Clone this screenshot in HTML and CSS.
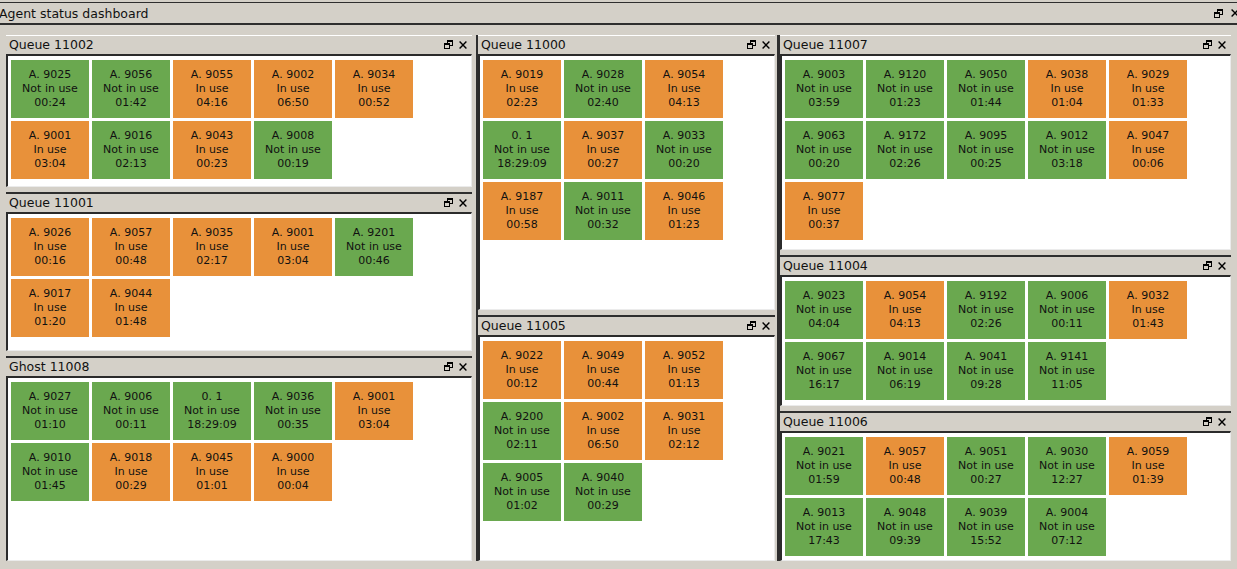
FILE: index.html
```html
<!DOCTYPE html>
<html>
<head>
<meta charset="utf-8">
<title>Agent status dashboard</title>
<link rel="stylesheet" href="styles.css">
</head>
<body>
<div class="titlebar">
  <span class="title">Agent status dashboard</span>
  <span class="ctrls top-ctrls">
    <svg class="ico-restore" width="9" height="9" viewBox="0 0 9 9" shape-rendering="crispEdges"><rect x="3" y="0" width="6" height="2"/><rect x="8" y="2" width="1" height="4"/><rect x="6" y="5" width="3" height="1"/><rect x="3" y="2" width="1" height="1"/><rect x="0" y="3" width="6" height="2"/><rect x="0" y="5" width="1" height="4"/><rect x="5" y="5" width="1" height="4"/><rect x="0" y="8" width="6" height="1"/></svg>
    <svg class="ico-close" width="8" height="8" viewBox="0 0 8 8"><path d="M0.6 0.6L7.4 7.4M7.4 0.6L0.6 7.4"/></svg>
  </span>
</div>
<div class="main">
  <div class="col col1">
    <section class="panel q11002">
      <header class="phead"><span>Queue 11002</span><span class="ctrls"><svg class="ico-restore" width="9" height="9" viewBox="0 0 9 9" shape-rendering="crispEdges"><rect x="3" y="0" width="6" height="2"/><rect x="8" y="2" width="1" height="4"/><rect x="6" y="5" width="3" height="1"/><rect x="3" y="2" width="1" height="1"/><rect x="0" y="3" width="6" height="2"/><rect x="0" y="5" width="1" height="4"/><rect x="5" y="5" width="1" height="4"/><rect x="0" y="8" width="6" height="1"/></svg><svg class="ico-close" width="8" height="8" viewBox="0 0 8 8"><path d="M0.6 0.6L7.4 7.4M7.4 0.6L0.6 7.4"/></svg></span></header>
      <div class="pbody">
        <div class="tile g"><span>A. 9025</span><span>Not in use</span><span>00:24</span></div>
        <div class="tile g"><span>A. 9056</span><span>Not in use</span><span>01:42</span></div>
        <div class="tile o"><span>A. 9055</span><span>In use</span><span>04:16</span></div>
        <div class="tile o"><span>A. 9002</span><span>In use</span><span>06:50</span></div>
        <div class="tile o"><span>A. 9034</span><span>In use</span><span>00:52</span></div>
        <div class="tile o"><span>A. 9001</span><span>In use</span><span>03:04</span></div>
        <div class="tile g"><span>A. 9016</span><span>Not in use</span><span>02:13</span></div>
        <div class="tile o"><span>A. 9043</span><span>In use</span><span>00:23</span></div>
        <div class="tile g"><span>A. 9008</span><span>Not in use</span><span>00:19</span></div>
      </div>
    </section>
    <section class="panel q11001">
      <header class="phead"><span>Queue 11001</span><span class="ctrls"><svg class="ico-restore" width="9" height="9" viewBox="0 0 9 9" shape-rendering="crispEdges"><rect x="3" y="0" width="6" height="2"/><rect x="8" y="2" width="1" height="4"/><rect x="6" y="5" width="3" height="1"/><rect x="3" y="2" width="1" height="1"/><rect x="0" y="3" width="6" height="2"/><rect x="0" y="5" width="1" height="4"/><rect x="5" y="5" width="1" height="4"/><rect x="0" y="8" width="6" height="1"/></svg><svg class="ico-close" width="8" height="8" viewBox="0 0 8 8"><path d="M0.6 0.6L7.4 7.4M7.4 0.6L0.6 7.4"/></svg></span></header>
      <div class="pbody">
        <div class="tile o"><span>A. 9026</span><span>In use</span><span>00:16</span></div>
        <div class="tile o"><span>A. 9057</span><span>In use</span><span>00:48</span></div>
        <div class="tile o"><span>A. 9035</span><span>In use</span><span>02:17</span></div>
        <div class="tile o"><span>A. 9001</span><span>In use</span><span>03:04</span></div>
        <div class="tile g"><span>A. 9201</span><span>Not in use</span><span>00:46</span></div>
        <div class="tile o"><span>A. 9017</span><span>In use</span><span>01:20</span></div>
        <div class="tile o"><span>A. 9044</span><span>In use</span><span>01:48</span></div>
      </div>
    </section>
    <section class="panel g11008">
      <header class="phead"><span>Ghost 11008</span><span class="ctrls"><svg class="ico-restore" width="9" height="9" viewBox="0 0 9 9" shape-rendering="crispEdges"><rect x="3" y="0" width="6" height="2"/><rect x="8" y="2" width="1" height="4"/><rect x="6" y="5" width="3" height="1"/><rect x="3" y="2" width="1" height="1"/><rect x="0" y="3" width="6" height="2"/><rect x="0" y="5" width="1" height="4"/><rect x="5" y="5" width="1" height="4"/><rect x="0" y="8" width="6" height="1"/></svg><svg class="ico-close" width="8" height="8" viewBox="0 0 8 8"><path d="M0.6 0.6L7.4 7.4M7.4 0.6L0.6 7.4"/></svg></span></header>
      <div class="pbody">
        <div class="tile g"><span>A. 9027</span><span>Not in use</span><span>01:10</span></div>
        <div class="tile g"><span>A. 9006</span><span>Not in use</span><span>00:11</span></div>
        <div class="tile g"><span>0. 1</span><span>Not in use</span><span>18:29:09</span></div>
        <div class="tile g"><span>A. 9036</span><span>Not in use</span><span>00:35</span></div>
        <div class="tile o"><span>A. 9001</span><span>In use</span><span>03:04</span></div>
        <div class="tile g"><span>A. 9010</span><span>Not in use</span><span>01:45</span></div>
        <div class="tile o"><span>A. 9018</span><span>In use</span><span>00:29</span></div>
        <div class="tile o"><span>A. 9045</span><span>In use</span><span>01:01</span></div>
        <div class="tile o"><span>A. 9000</span><span>In use</span><span>00:04</span></div>
      </div>
    </section>
  </div>
  <div class="col col2">
    <section class="panel q11000">
      <header class="phead"><span>Queue 11000</span><span class="ctrls"><svg class="ico-restore" width="9" height="9" viewBox="0 0 9 9" shape-rendering="crispEdges"><rect x="3" y="0" width="6" height="2"/><rect x="8" y="2" width="1" height="4"/><rect x="6" y="5" width="3" height="1"/><rect x="3" y="2" width="1" height="1"/><rect x="0" y="3" width="6" height="2"/><rect x="0" y="5" width="1" height="4"/><rect x="5" y="5" width="1" height="4"/><rect x="0" y="8" width="6" height="1"/></svg><svg class="ico-close" width="8" height="8" viewBox="0 0 8 8"><path d="M0.6 0.6L7.4 7.4M7.4 0.6L0.6 7.4"/></svg></span></header>
      <div class="pbody">
        <div class="tile o"><span>A. 9019</span><span>In use</span><span>02:23</span></div>
        <div class="tile g"><span>A. 9028</span><span>Not in use</span><span>02:40</span></div>
        <div class="tile o"><span>A. 9054</span><span>In use</span><span>04:13</span></div>
        <div class="tile g"><span>0. 1</span><span>Not in use</span><span>18:29:09</span></div>
        <div class="tile o"><span>A. 9037</span><span>In use</span><span>00:27</span></div>
        <div class="tile g"><span>A. 9033</span><span>Not in use</span><span>00:20</span></div>
        <div class="tile o"><span>A. 9187</span><span>In use</span><span>00:58</span></div>
        <div class="tile g"><span>A. 9011</span><span>Not in use</span><span>00:32</span></div>
        <div class="tile o"><span>A. 9046</span><span>In use</span><span>01:23</span></div>
      </div>
    </section>
    <section class="panel q11005">
      <header class="phead"><span>Queue 11005</span><span class="ctrls"><svg class="ico-restore" width="9" height="9" viewBox="0 0 9 9" shape-rendering="crispEdges"><rect x="3" y="0" width="6" height="2"/><rect x="8" y="2" width="1" height="4"/><rect x="6" y="5" width="3" height="1"/><rect x="3" y="2" width="1" height="1"/><rect x="0" y="3" width="6" height="2"/><rect x="0" y="5" width="1" height="4"/><rect x="5" y="5" width="1" height="4"/><rect x="0" y="8" width="6" height="1"/></svg><svg class="ico-close" width="8" height="8" viewBox="0 0 8 8"><path d="M0.6 0.6L7.4 7.4M7.4 0.6L0.6 7.4"/></svg></span></header>
      <div class="pbody">
        <div class="tile o"><span>A. 9022</span><span>In use</span><span>00:12</span></div>
        <div class="tile o"><span>A. 9049</span><span>In use</span><span>00:44</span></div>
        <div class="tile o"><span>A. 9052</span><span>In use</span><span>01:13</span></div>
        <div class="tile g"><span>A. 9200</span><span>Not in use</span><span>02:11</span></div>
        <div class="tile o"><span>A. 9002</span><span>In use</span><span>06:50</span></div>
        <div class="tile o"><span>A. 9031</span><span>In use</span><span>02:12</span></div>
        <div class="tile g"><span>A. 9005</span><span>Not in use</span><span>01:02</span></div>
        <div class="tile g"><span>A. 9040</span><span>Not in use</span><span>00:29</span></div>
      </div>
    </section>
  </div>
  <div class="col col3">
    <section class="panel q11007">
      <header class="phead"><span>Queue 11007</span><span class="ctrls"><svg class="ico-restore" width="9" height="9" viewBox="0 0 9 9" shape-rendering="crispEdges"><rect x="3" y="0" width="6" height="2"/><rect x="8" y="2" width="1" height="4"/><rect x="6" y="5" width="3" height="1"/><rect x="3" y="2" width="1" height="1"/><rect x="0" y="3" width="6" height="2"/><rect x="0" y="5" width="1" height="4"/><rect x="5" y="5" width="1" height="4"/><rect x="0" y="8" width="6" height="1"/></svg><svg class="ico-close" width="8" height="8" viewBox="0 0 8 8"><path d="M0.6 0.6L7.4 7.4M7.4 0.6L0.6 7.4"/></svg></span></header>
      <div class="pbody">
        <div class="tile g"><span>A. 9003</span><span>Not in use</span><span>03:59</span></div>
        <div class="tile g"><span>A. 9120</span><span>Not in use</span><span>01:23</span></div>
        <div class="tile g"><span>A. 9050</span><span>Not in use</span><span>01:44</span></div>
        <div class="tile o"><span>A. 9038</span><span>In use</span><span>01:04</span></div>
        <div class="tile o"><span>A. 9029</span><span>In use</span><span>01:33</span></div>
        <div class="tile g"><span>A. 9063</span><span>Not in use</span><span>00:20</span></div>
        <div class="tile g"><span>A. 9172</span><span>Not in use</span><span>02:26</span></div>
        <div class="tile g"><span>A. 9095</span><span>Not in use</span><span>00:25</span></div>
        <div class="tile g"><span>A. 9012</span><span>Not in use</span><span>03:18</span></div>
        <div class="tile o"><span>A. 9047</span><span>In use</span><span>00:06</span></div>
        <div class="tile o"><span>A. 9077</span><span>In use</span><span>00:37</span></div>
      </div>
    </section>
    <section class="panel q11004">
      <header class="phead"><span>Queue 11004</span><span class="ctrls"><svg class="ico-restore" width="9" height="9" viewBox="0 0 9 9" shape-rendering="crispEdges"><rect x="3" y="0" width="6" height="2"/><rect x="8" y="2" width="1" height="4"/><rect x="6" y="5" width="3" height="1"/><rect x="3" y="2" width="1" height="1"/><rect x="0" y="3" width="6" height="2"/><rect x="0" y="5" width="1" height="4"/><rect x="5" y="5" width="1" height="4"/><rect x="0" y="8" width="6" height="1"/></svg><svg class="ico-close" width="8" height="8" viewBox="0 0 8 8"><path d="M0.6 0.6L7.4 7.4M7.4 0.6L0.6 7.4"/></svg></span></header>
      <div class="pbody">
        <div class="tile g"><span>A. 9023</span><span>Not in use</span><span>04:04</span></div>
        <div class="tile o"><span>A. 9054</span><span>In use</span><span>04:13</span></div>
        <div class="tile g"><span>A. 9192</span><span>Not in use</span><span>02:26</span></div>
        <div class="tile g"><span>A. 9006</span><span>Not in use</span><span>00:11</span></div>
        <div class="tile o"><span>A. 9032</span><span>In use</span><span>01:43</span></div>
        <div class="tile g"><span>A. 9067</span><span>Not in use</span><span>16:17</span></div>
        <div class="tile g"><span>A. 9014</span><span>Not in use</span><span>06:19</span></div>
        <div class="tile g"><span>A. 9041</span><span>Not in use</span><span>09:28</span></div>
        <div class="tile g"><span>A. 9141</span><span>Not in use</span><span>11:05</span></div>
      </div>
    </section>
    <section class="panel q11006">
      <header class="phead"><span>Queue 11006</span><span class="ctrls"><svg class="ico-restore" width="9" height="9" viewBox="0 0 9 9" shape-rendering="crispEdges"><rect x="3" y="0" width="6" height="2"/><rect x="8" y="2" width="1" height="4"/><rect x="6" y="5" width="3" height="1"/><rect x="3" y="2" width="1" height="1"/><rect x="0" y="3" width="6" height="2"/><rect x="0" y="5" width="1" height="4"/><rect x="5" y="5" width="1" height="4"/><rect x="0" y="8" width="6" height="1"/></svg><svg class="ico-close" width="8" height="8" viewBox="0 0 8 8"><path d="M0.6 0.6L7.4 7.4M7.4 0.6L0.6 7.4"/></svg></span></header>
      <div class="pbody">
        <div class="tile g"><span>A. 9021</span><span>Not in use</span><span>01:59</span></div>
        <div class="tile o"><span>A. 9057</span><span>In use</span><span>00:48</span></div>
        <div class="tile g"><span>A. 9051</span><span>Not in use</span><span>00:27</span></div>
        <div class="tile g"><span>A. 9030</span><span>Not in use</span><span>12:27</span></div>
        <div class="tile o"><span>A. 9059</span><span>In use</span><span>01:39</span></div>
        <div class="tile g"><span>A. 9013</span><span>Not in use</span><span>17:43</span></div>
        <div class="tile g"><span>A. 9048</span><span>Not in use</span><span>09:39</span></div>
        <div class="tile g"><span>A. 9039</span><span>Not in use</span><span>15:52</span></div>
        <div class="tile g"><span>A. 9004</span><span>Not in use</span><span>07:12</span></div>
      </div>
    </section>
  </div>
</div>
</body>
</html>
```
FILE: styles.css
```css
* { box-sizing: border-box; }
html, body { margin: 0; padding: 0; }
body {
  width: 1237px;
  height: 569px;
  overflow: hidden;
  background: #d4d0c8;
  font-family: "DejaVu Sans", "Liberation Sans", sans-serif;
  color: #000;
}

.titlebar {
  margin-top: 2px;
  height: 23px;
  border-top: 1px solid #2e2e2e;
  border-bottom: 2px solid #2e2e2e;
  display: flex;
  align-items: center;
  justify-content: space-between;
  font-size: 12.5px;
  overflow: hidden;
}
.title { margin-left: -1px; color: #111; }
.ctrls { display: flex; align-items: center; gap: 6px; }
.top-ctrls { margin-right: -2px; gap: 8px; }

.ico-restore { display: block; fill: #000; }
.ico-close { display: block; fill: none; stroke: #000; stroke-width: 1.4; }

.main {
  display: flex;
  height: 544px;
  padding: 10px 6px 8px 6px;
}

.col {
  display: flex;
  flex-direction: column;
  gap: 5px;
}
.col1 { width: 466px; }
.col2 { width: 299px; margin-left: 4px; border-left: 2px solid #2e2e2e; }
.col3 { width: 454px; margin-left: 2px; border-left: 3px solid #2e2e2e; }

.panel {
  display: flex;
  flex-direction: column;
  flex: none;
}
.q11002 { height: 152px; }
.q11001 { height: 159px; }
.g11008 { height: 205px; }
.q11000 { height: 275px; }
.q11005 { height: 246px; }
.q11007 { height: 215px; }
.q11004 { height: 151px; }
.q11006 { height: 150px; }

.phead {
  flex: none;
  height: 19px;
  border-top: 1px solid #ffffff;
  display: flex;
  align-items: center;
  justify-content: space-between;
  padding: 0 5px 1px 3px;
  font-size: 12.5px;
  color: #111;
}
.panel + .panel .phead {
  height: 20px;
  border-top: 2px solid #2e2e2e;
}

.pbody {
  flex: 1;
  background: #fff;
  border-top: 2px solid #2b2b2b;
  border-left: 2px solid #2b2b2b;
  border-right: 1px solid #ebebeb;
  border-bottom: 1px solid #ebebeb;
  padding: 4px 3px;
  display: flex;
  flex-wrap: wrap;
  align-content: flex-start;
  gap: 3px;
}

.tile {
  width: 78px;
  height: 58px;
  display: flex;
  flex-direction: column;
  align-items: center;
  justify-content: center;
  font-size: 11px;
  line-height: 14px;
  padding-bottom: 1px;
  color: #111;
}
.tile span { display: block; white-space: nowrap; }
.g { background: #6aa84f; }
.o { background: #e8913a; }
```
